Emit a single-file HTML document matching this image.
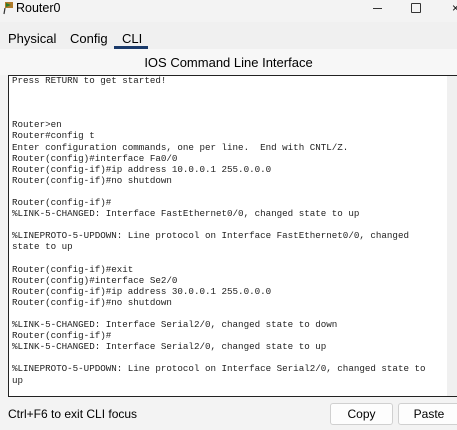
<!DOCTYPE html>
<html><head><style>
body{margin:0;width:457px;height:430px;background:#f3f3f3;font-family:"Liberation Sans",sans-serif;position:relative;overflow:hidden}
.title{position:absolute;left:0;top:0;width:457px;height:22px;background:#f3f3f3}
.tabs{position:absolute;top:22px;left:0;width:457px;height:27px;background:#f0f0f0}
.tab{position:absolute;top:9px;font-size:13px;color:#000}
.term{position:absolute;left:8px;top:75px;width:460px;height:322px;background:#fff;border:1px solid #222;box-sizing:border-box}
.sb{position:absolute;right:10px;top:0;width:10px;height:100%;background:#f0f0f0}
pre{margin:0;position:absolute;left:3px;top:-1px;font-family:"Liberation Mono",monospace;font-size:9.2px;line-height:11.1px;color:#222}
.btn{position:absolute;top:403px;height:22px;background:#fdfdfd;border:1px solid #d0d0d0;border-radius:3px;font-size:12px;text-align:center;line-height:21px;box-sizing:border-box}
</style></head><body>
<div class="title">
<svg style="position:absolute;left:3px;top:1px" width="12" height="14"><path d="M2 1h8v6H2z" fill="#b07a2a"/><path d="M3 2l5 2-5 2z" fill="#2a7a2a"/><path d="M2 7l-1 6" stroke="#333" stroke-width="1.2"/></svg>
<div style="position:absolute;left:16px;top:1px;font-size:12.5px">Router0</div>
<div style="position:absolute;left:373px;top:8px;width:9px;height:1px;background:#333"></div>
<div style="position:absolute;left:411px;top:3px;width:8px;height:8px;border:1px solid #333;border-radius:1px"></div>
<div style="position:absolute;left:452px;top:1px;font-size:12px">×</div>
</div>
<div class="tabs">
<div class="tab" style="left:8px">Physical</div>
<div class="tab" style="left:70px">Config</div>
<div class="tab" style="left:122px">CLI</div>
<div style="position:absolute;left:114px;top:24px;width:34px;height:3px;background:#1a3a6a"></div>
</div>
<div style="position:absolute;left:0;top:49px;width:457px;height:26px;background:#f7f7f7"></div>
<div style="position:absolute;left:0;top:55px;width:457px;text-align:center;font-size:13px">IOS Command Line Interface</div>
<div class="term"><div class="sb"></div><pre>Press RETURN to get started!



Router>en
Router#config t
Enter configuration commands, one per line.  End with CNTL/Z.
Router(config)#interface Fa0/0
Router(config-if)#ip address 10.0.0.1 255.0.0.0
Router(config-if)#no shutdown

Router(config-if)#
%LINK-5-CHANGED: Interface FastEthernet0/0, changed state to up

%LINEPROTO-5-UPDOWN: Line protocol on Interface FastEthernet0/0, changed
state to up

Router(config-if)#exit
Router(config)#interface Se2/0
Router(config-if)#ip address 30.0.0.1 255.0.0.0
Router(config-if)#no shutdown

%LINK-5-CHANGED: Interface Serial2/0, changed state to down
Router(config-if)#
%LINK-5-CHANGED: Interface Serial2/0, changed state to up

%LINEPROTO-5-UPDOWN: Line protocol on Interface Serial2/0, changed state to
up</pre></div>
<div style="position:absolute;left:8px;top:407px;font-size:12px">Ctrl+F6 to exit CLI focus</div>
<div class="btn" style="left:330px;width:63px">Copy</div>
<div class="btn" style="left:398px;width:62px">Paste</div>
</body></html>
